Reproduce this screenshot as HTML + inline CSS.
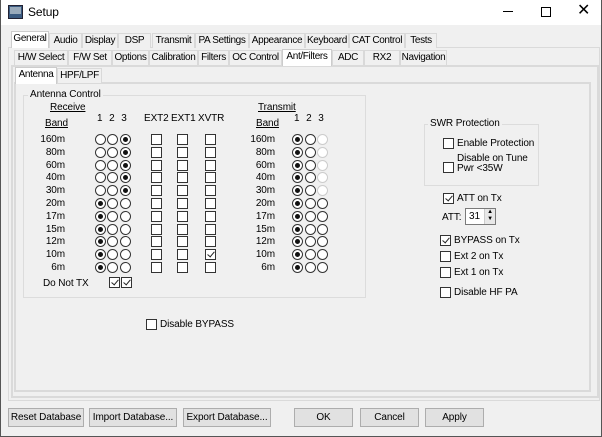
<!DOCTYPE html>
<html><head><meta charset="utf-8"><style>
*{box-sizing:border-box;margin:0;padding:0}
body{width:602px;height:437px;background:#f0f0f0;font:10px "Liberation Sans",sans-serif;letter-spacing:-0.1px;color:#000;position:relative;overflow:hidden}
.a{position:absolute;white-space:nowrap}
#win{position:absolute;left:0;top:0;width:602px;height:437px;border:1px solid #555;border-top:none;pointer-events:none}
#title{position:absolute;left:0;top:0;width:602px;height:25px;background:#fff}
.tab{position:absolute;height:15px;border:1px solid #d9d9d9;border-bottom:none;background:#f0f0f0;text-align:center;line-height:14px;white-space:nowrap;overflow:hidden;letter-spacing:-0.35px}
.tab.s{background:#fff;height:17px;border-color:#ccc}
.pan{position:absolute;border:1px solid #dadada;background:#f0f0f0}
.o{position:absolute;width:11px;height:11px;border:1px solid #333;border-radius:50%;background:#fff}
.o.s::after{content:"";position:absolute;left:2px;top:2px;width:5px;height:5px;border-radius:50%;background:#111}
.o.d{border-color:#ccc}
.c{position:absolute;width:11px;height:11px;border:1px solid #333;background:#fff}
.c.k::after{content:"";position:absolute;left:3px;top:0px;width:3px;height:6px;border:solid #222;border-width:0 1.2px 1.2px 0;transform:rotate(40deg)}
.row{position:absolute;left:0;width:602px;height:13px;line-height:11px}
.row .b{position:absolute;right:537px;top:0;text-align:right}
.row .tb{position:absolute;right:327px;top:0;text-align:right}
.o1{left:95px}.o2{left:107px}.o3{left:120px}
.e1{left:151px}.e2{left:177px}.e3{left:205px}
.t1{left:292px}.t2{left:305px}.t3{left:317px}
.row i,.row b{top:0}
.grp{position:absolute;border:1px solid #dcdcdc}
.btn{position:absolute;top:408px;height:19px;border:1px solid #adadad;background:#e1e1e1;text-align:center;line-height:17px;white-space:nowrap}
u{text-decoration:underline}
</style></head><body>
<div id="title"></div>
<div class="a" style="left:8px;top:5px;width:15px;height:14px;background:#3a5a80;border:1px solid #223"></div>
<div class="a" style="left:10px;top:7px;width:11px;height:7px;background:#9ab"></div>
<div class="a" style="left:28px;top:5px;font-size:12px">Setup</div>
<div class="a" style="left:503px;top:11px;width:10px;height:1px;background:#000"></div>
<div class="a" style="left:541px;top:7px;width:10px;height:10px;border:1px solid #000"></div>
<div class="a" style="left:577px;top:3px;font-size:16px;line-height:16px">✕</div>

<div class="pan" style="left:8px;top:47px;width:592px;height:354px"></div>
<div class="tab s" style="left:11px;top:31px;width:38px">General</div>
<div class="tab" style="left:49px;top:33px;width:33px">Audio</div>
<div class="tab" style="left:82px;top:33px;width:36px">Display</div>
<div class="tab" style="left:118px;top:33px;width:33px">DSP</div>
<div class="tab" style="left:152px;top:33px;width:43px">Transmit</div>
<div class="tab" style="left:195px;top:33px;width:54px">PA Settings</div>
<div class="tab" style="left:249px;top:33px;width:56px">Appearance</div>
<div class="tab" style="left:305px;top:33px;width:44px">Keyboard</div>
<div class="tab" style="left:349px;top:33px;width:56px">CAT Control</div>
<div class="tab" style="left:405px;top:33px;width:32px">Tests</div>

<div class="pan" style="left:11px;top:65px;width:588px;height:333px;background:#fff"></div>
<div class="pan" style="left:12px;top:66px;width:586px;height:331px"></div>
<div class="tab" style="left:14px;top:50px;width:54px">H/W Select</div>
<div class="tab" style="left:68px;top:50px;width:44px">F/W Set</div>
<div class="tab" style="left:112px;top:50px;width:37px">Options</div>
<div class="tab" style="left:149px;top:50px;width:49px">Calibration</div>
<div class="tab" style="left:198px;top:50px;width:31px">Filters</div>
<div class="tab" style="left:229px;top:50px;width:53px">OC Control</div>
<div class="tab s" style="left:282px;top:49px;width:50px">Ant/Filters</div>
<div class="tab" style="left:332px;top:50px;width:32px">ADC</div>
<div class="tab" style="left:364px;top:50px;width:36px">RX2</div>
<div class="tab" style="left:400px;top:50px;width:47px">Navigation</div>

<div class="pan" style="left:14px;top:82px;width:577px;height:310px;background:#fff"></div>
<div class="pan" style="left:15px;top:83px;width:575px;height:308px"></div>
<div class="tab s" style="left:15px;top:67px;width:42px">Antenna</div>
<div class="tab" style="left:57px;top:68px;width:45px">HPF/LPF</div>

<div class="grp" style="left:23px;top:95px;width:343px;height:203px"></div>
<div class="a" style="left:28px;top:89px;background:#f0f0f0;padding:0 2px">Antenna Control</div>
<div class="a" style="left:50px;top:102px"><u>Receive</u></div>
<div class="a" style="left:45px;top:118px"><u>Band</u></div>
<div class="a" style="left:97px;top:113px;word-spacing:4px">1 2 3</div>
<div class="a" style="left:144px;top:113px">EXT2</div>
<div class="a" style="left:171px;top:113px">EXT1</div>
<div class="a" style="left:198px;top:113px">XVTR</div>
<div class="a" style="left:258px;top:102px"><u>Transmit</u></div>
<div class="a" style="left:256px;top:118px"><u>Band</u></div>
<div class="a" style="left:294px;top:113px;word-spacing:4px">1 2 3</div>

<div class="row" style="top:134px"><span class="b">160m</span><i class="o o1"></i><i class="o o2"></i><i class="o o3 s"></i><b class="c e1"></b><b class="c e2"></b><b class="c e3"></b><span class="tb">160m</span><i class="o t1 s"></i><i class="o t2"></i><i class="o t3 d"></i></div>
<div class="row" style="top:147px"><span class="b">80m</span><i class="o o1"></i><i class="o o2"></i><i class="o o3 s"></i><b class="c e1"></b><b class="c e2"></b><b class="c e3"></b><span class="tb">80m</span><i class="o t1 s"></i><i class="o t2"></i><i class="o t3 d"></i></div>
<div class="row" style="top:160px"><span class="b">60m</span><i class="o o1"></i><i class="o o2"></i><i class="o o3 s"></i><b class="c e1"></b><b class="c e2"></b><b class="c e3"></b><span class="tb">60m</span><i class="o t1 s"></i><i class="o t2"></i><i class="o t3 d"></i></div>
<div class="row" style="top:172px"><span class="b">40m</span><i class="o o1"></i><i class="o o2"></i><i class="o o3 s"></i><b class="c e1"></b><b class="c e2"></b><b class="c e3"></b><span class="tb">40m</span><i class="o t1 s"></i><i class="o t2"></i><i class="o t3 d"></i></div>
<div class="row" style="top:185px"><span class="b">30m</span><i class="o o1"></i><i class="o o2"></i><i class="o o3 s"></i><b class="c e1"></b><b class="c e2"></b><b class="c e3"></b><span class="tb">30m</span><i class="o t1 s"></i><i class="o t2"></i><i class="o t3 d"></i></div>
<div class="row" style="top:198px"><span class="b">20m</span><i class="o o1 s"></i><i class="o o2"></i><i class="o o3"></i><b class="c e1"></b><b class="c e2"></b><b class="c e3"></b><span class="tb">20m</span><i class="o t1 s"></i><i class="o t2"></i><i class="o t3"></i></div>
<div class="row" style="top:211px"><span class="b">17m</span><i class="o o1 s"></i><i class="o o2"></i><i class="o o3"></i><b class="c e1"></b><b class="c e2"></b><b class="c e3"></b><span class="tb">17m</span><i class="o t1 s"></i><i class="o t2"></i><i class="o t3"></i></div>
<div class="row" style="top:224px"><span class="b">15m</span><i class="o o1 s"></i><i class="o o2"></i><i class="o o3"></i><b class="c e1"></b><b class="c e2"></b><b class="c e3"></b><span class="tb">15m</span><i class="o t1 s"></i><i class="o t2"></i><i class="o t3"></i></div>
<div class="row" style="top:236px"><span class="b">12m</span><i class="o o1 s"></i><i class="o o2"></i><i class="o o3"></i><b class="c e1"></b><b class="c e2"></b><b class="c e3"></b><span class="tb">12m</span><i class="o t1 s"></i><i class="o t2"></i><i class="o t3"></i></div>
<div class="row" style="top:249px"><span class="b">10m</span><i class="o o1 s"></i><i class="o o2"></i><i class="o o3"></i><b class="c e1"></b><b class="c e2"></b><b class="c e3 k"></b><span class="tb">10m</span><i class="o t1 s"></i><i class="o t2"></i><i class="o t3"></i></div>
<div class="row" style="top:262px"><span class="b">6m</span><i class="o o1 s"></i><i class="o o2"></i><i class="o o3"></i><b class="c e1"></b><b class="c e2"></b><b class="c e3"></b><span class="tb">6m</span><i class="o t1 s"></i><i class="o t2"></i><i class="o t3"></i></div>
<div class="a" style="left:43px;top:278px">Do Not TX</div>
<b class="c k" style="left:109px;top:277px"></b><b class="c k" style="left:121px;top:277px"></b>

<div class="grp" style="left:424px;top:124px;width:115px;height:62px"></div>
<div class="a" style="left:428px;top:118px;background:#f0f0f0;padding:0 2px">SWR Protection</div>
<b class="c" style="left:443px;top:138px"></b><div class="a" style="left:457px;top:138px">Enable Protection</div>
<b class="c" style="left:443px;top:162px"></b><div class="a" style="left:457px;top:154px;line-height:10px">Disable on Tune<br>Pwr &lt;35W</div>
<b class="c k" style="left:443px;top:193px"></b><div class="a" style="left:457px;top:193px">ATT on Tx</div>
<div class="a" style="left:442px;top:212px">ATT:</div>
<div class="a" style="left:465px;top:208px;width:31px;height:17px;border:1px solid #7a7a7a;background:#fff;padding:2px 0 0 3px">31</div>
<div class="a" style="left:484px;top:209px;width:11px;height:15px;background:#e8e8e8;border-left:1px solid #ccc;font-size:6px;line-height:7px;text-align:center">▲<br>▼</div>
<b class="c k" style="left:440px;top:235px"></b><div class="a" style="left:454px;top:235px">BYPASS on Tx</div>
<b class="c" style="left:440px;top:251px"></b><div class="a" style="left:454px;top:251px">Ext 2 on Tx</div>
<b class="c" style="left:440px;top:267px"></b><div class="a" style="left:454px;top:267px">Ext 1 on Tx</div>
<b class="c" style="left:440px;top:287px"></b><div class="a" style="left:454px;top:287px">Disable HF PA</div>

<b class="c" style="left:146px;top:319px"></b><div class="a" style="left:160px;top:319px">Disable BYPASS</div>

<div class="btn" style="left:8px;width:76px">Reset Database</div>
<div class="btn" style="left:89px;width:88px">Import Database...</div>
<div class="btn" style="left:183px;width:88px">Export Database...</div>
<div class="btn" style="left:294px;width:59px">OK</div>
<div class="btn" style="left:360px;width:59px">Cancel</div>
<div class="btn" style="left:425px;width:59px">Apply</div>
<div id="win"></div>
</body></html>
